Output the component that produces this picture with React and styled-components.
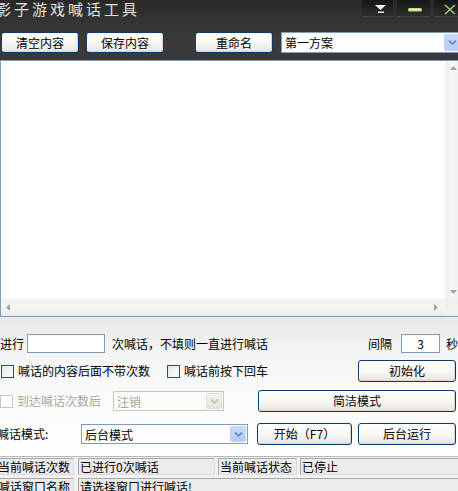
import React from 'react'
import styled, { createGlobalStyle } from 'styled-components'

const GlobalStyle = createGlobalStyle`
  html, body {
    margin: 0;
    padding: 0;
    overflow: hidden;
    background: #fff;
  }
  body {
    font-family: "Noto Sans CJK SC", "Liberation Sans", sans-serif;
    font-size: 12px;
    color: #000;
  }
`

const Window = styled.div`
  width: 462px;
  height: 491px;
  display: flex;
  flex-direction: column;
  overflow: hidden;
`

const Top = styled.div`
  height: 60px;
  background: linear-gradient(#282828, #343434 35%, #3b3b3b 70%, #383838);
  display: flex;
  flex-direction: column;
`

const TitleBar = styled.div`
  height: 20px;
  display: flex;
  align-items: flex-start;
`

const Title = styled.div`
  margin-left: -4px;
  font-family: "Noto Sans CJK SC", serif;
  font-size: 15px;
  line-height: 17px;
  letter-spacing: 3px;
  color: #e2e2e2;
  white-space: nowrap;
`

const WinControls = styled.div`
  margin-left: auto;
  display: flex;
  gap: 4px;
`

const WinBtn = styled.div`
  width: ${p => p.$w}px;
  height: 16px;
  background: linear-gradient(#161616, #242424 60%, #2e2e2e);
  border-bottom: 1px solid #444;
  display: flex;
`

const Toolbar = styled.div`
  height: 40px;
  padding: 12px 0 0 1px;
  box-sizing: border-box;
  display: flex;
  align-items: flex-start;
`

const Button = styled.button`
  flex-shrink: 0;
  width: ${p => p.$w}px;
  height: ${p => p.$h || 22}px;
  margin-left: ${p => p.$ml || 0}px;
  border: 1px solid #0a3a6e;
  border-radius: 3px;
  background: linear-gradient(#ffffff, #f7f7f4 55%, #e6e3da);
  box-shadow: inset 1px 1px 0 #fff, inset -1px -1px 0 #d8d5ca;
  font: 12px "Noto Sans CJK SC", sans-serif;
  color: #000;
  padding: 0;
  line-height: 1;
`

const Combo = styled.div`
  flex-shrink: 0;
  box-sizing: border-box;
  width: ${p => p.$w}px;
  height: ${p => p.$h || 20}px;
  margin-left: ${p => p.$ml || 0}px;
  border: 1px solid ${p => (p.$disabled ? '#c9c7ba' : '#7f9db9')};
  background: ${p => (p.$disabled ? '#fbfbf9' : '#fff')};
  color: ${p => (p.$disabled ? '#aca899' : '#000')};
  display: flex;
  align-items: center;
`

const ComboText = styled.span`
  flex: 1;
  padding-left: 3px;
  white-space: nowrap;
`

const ComboArrow = styled.span`
  width: 16px;
  align-self: stretch;
  margin: 1px;
  border-radius: 2px;
  background: ${p =>
    p.$disabled
      ? 'linear-gradient(#f4f4f0, #e4e2da)'
      : 'linear-gradient(#cbdafc, #b4c9f6)'};
  border: 1px solid ${p => (p.$disabled ? '#e0ded4' : '#c3d3f6')};
  box-sizing: border-box;
  display: flex;
  align-items: center;
  justify-content: center;
`

const Editor = styled.div`
  height: 257px;
  box-sizing: border-box;
  border-top: 1px solid #7f9db9;
  border-bottom: 1px solid #7f9db9;
  border-left: 1px solid #7f9db9;
  display: grid;
  grid-template-columns: 1fr 17px;
  grid-template-rows: 1fr 17px;
  background: #fff;
`

const TextArea = styled.div`
  background: #fff;
`

const VScroll = styled.div`
  background: linear-gradient(90deg, #f0f0ee, #f6f6f4 40%, #efefed);
  display: flex;
  flex-direction: column;
  justify-content: space-between;
  align-items: center;
  padding: 5px 0 5px;
  box-sizing: border-box;
`

const HScroll = styled.div`
  background: linear-gradient(#f0f0ee, #f6f6f4 40%, #ececea);
  display: flex;
  justify-content: space-between;
  align-items: center;
  padding: 0 7px 0 5px;
`

const Corner = styled.div`
  background: #f0f0ee;
`

const Panel = styled.div`
  flex: 1;
  background: linear-gradient(#e9e9e9, #f4f4f4 25%, #fbfbfb 60%, #fefefe);
  padding-top: 17px;
  display: flex;
  flex-direction: column;
`

const Row = styled.div`
  height: ${p => p.$h}px;
  margin-top: ${p => p.$mt || 0}px;
  display: flex;
  align-items: center;
`

const Label = styled.span`
  flex-shrink: 0;
  white-space: nowrap;
  width: ${p => (p.$w ? `${p.$w}px` : 'auto')};
  margin-left: ${p => p.$ml || 0}px;
  color: ${p => (p.$disabled ? '#aca899' : '#000')};
  line-height: 14px;
`

const Input = styled.div`
  flex-shrink: 0;
  box-sizing: border-box;
  width: ${p => p.$w}px;
  height: 19px;
  margin-left: ${p => p.$ml || 0}px;
  border: 1px solid #7f9db9;
  background: #fff;
  display: flex;
  align-items: center;
  justify-content: center;
  font-size: 12px;
`

const Check = styled.span`
  flex-shrink: 0;
  box-sizing: border-box;
  width: 13px;
  height: 13px;
  margin-left: ${p => p.$ml || 0}px;
  border: 1px solid ${p => (p.$disabled ? '#cac8bb' : '#1c5180')};
  background: ${p => (p.$disabled ? '#fff' : 'linear-gradient(135deg, #e6e6e0, #fff)')};
`

const StatusBar = styled.div`
  height: 35px;
  border-top: 1px solid #b9b9b9;
  background: #f1f1f1;
  padding-top: 1px;
  box-sizing: border-box;
  display: flex;
  flex-direction: column;
  gap: 3px;
`

const StatusRow = styled.div`
  height: 17px;
  flex-shrink: 0;
  display: flex;
  margin-left: -4px;
`

const Cell = styled.div`
  flex-shrink: 0;
  box-sizing: border-box;
  width: ${p => p.$w}px;
  margin-left: ${p => p.$ml || 0}px;
  height: 17px;
  border: 1px solid;
  border-color: #a8a8a8 #dcdcdc #dcdcdc #a8a8a8;
  background: #ebebeb;
  padding-left: ${p => p.$pl || 1}px;
  line-height: 15px;
  white-space: nowrap;
  overflow: hidden;
`

const Chevron = ({ color = '#4c6aa6' }) => (
  <svg width="9" height="7" viewBox="0 0 9 7">
    <path d="M1 1.5 L4.5 5 L8 1.5" fill="none" stroke={color} strokeWidth="1.8" />
  </svg>
)

const Arrow = ({ dir }) => {
  const pts = {
    up: '0,4 3.5,0 7,4',
    down: '0,0 7,0 3.5,4',
    left: '4,0 4,7 0,3.5',
    right: '0,0 0,7 4,3.5',
  }[dir]
  const vertical = dir === 'up' || dir === 'down'
  return (
    <svg width={vertical ? 7 : 4} height={vertical ? 4 : 7}>
      <polygon points={pts} fill="#a3a3a3" />
    </svg>
  )
}

export default function App() {
  return (
    <>
      <GlobalStyle />
      <Window>
        <Top>
          <TitleBar>
            <Title>影子游戏喊话工具</Title>
            <WinControls>
              <WinBtn $w={31}>
                <svg width="31" height="16">
                  <polygon points="13,5 24,5 18.5,10" fill="#f2f2f2" />
                  <rect x="16" y="11.5" width="6" height="1.5" fill="#f2f2f2" />
                </svg>
              </WinBtn>
              <WinBtn $w={33}>
                <svg width="33" height="16">
                  <rect x="11" y="8" width="14" height="3.5" rx="1.5" fill="#b3df86" />
                  <rect x="12" y="9" width="12" height="1.2" fill="#dcf5c4" />
                </svg>
              </WinBtn>
              <WinBtn $w={28}>
                <svg width="28" height="16">
                  <path d="M11 5 L21 14 M21 5 L11 14" stroke="#a6d67c" strokeWidth="1.4" />
                </svg>
              </WinBtn>
            </WinControls>
          </TitleBar>
          <Toolbar>
            <Button $w={78} $h={21}>清空内容</Button>
            <Button $w={78} $h={21} $ml={7}>保存内容</Button>
            <Button $w={78} $h={21} $ml={31}>重命名</Button>
            <Combo $w={181} $h={21} $ml={8}>
              <ComboText>第一方案</ComboText>
              <ComboArrow><Chevron color="#6d8cc8" /></ComboArrow>
            </Combo>
          </Toolbar>
        </Top>

        <Editor>
          <TextArea />
          <VScroll>
            <Arrow dir="up" />
            <Arrow dir="down" />
          </VScroll>
          <HScroll>
            <Arrow dir="left" />
            <Arrow dir="right" />
          </HScroll>
          <Corner />
        </Editor>

        <Panel>
          <Row $h={19}>
            <Label $w={24}>进行</Label>
            <Input $w={78} $ml={3} />
            <Label $w={156} $ml={7}>次喊话，不填则一直进行喊话</Label>
            <Label $w={24} $ml={100}>间隔</Label>
            <Input $w={39} $ml={9}>3</Input>
            <Label $ml={6}>秒</Label>
          </Row>
          <Row $h={22} $mt={7}>
            <Check $ml={1} />
            <Label $w={132} $ml={4}>喊话的内容后面不带次数</Label>
            <Check $ml={17} />
            <Label $w={84} $ml={4}>喊话前按下回车</Label>
            <Button $w={98} $ml={90}>初始化</Button>
          </Row>
          <Row $h={22} $mt={8}>
            <Check $disabled $ml={0} />
            <Label $disabled $w={84} $ml={4}>到达喊话次数后</Label>
            <Combo $disabled $w={111} $ml={12}>
              <ComboText>注销</ComboText>
              <ComboArrow $disabled><Chevron color="#c8c6bc" /></ComboArrow>
            </Combo>
            <Button $w={198} $ml={34}>简洁模式</Button>
          </Row>
          <Row $h={22} $mt={11}>
            <Label $w={84} $ml={-3}>喊话模式:</Label>
            <Combo $w={167}>
              <ComboText>后台模式</ComboText>
              <ComboArrow><Chevron color="#6d8cc8" /></ComboArrow>
            </Combo>
            <Button $w={95} $ml={9}>开始（F7）</Button>
            <Button $w={98} $ml={6}>后台运行</Button>
          </Row>
        </Panel>

        <StatusBar>
          <StatusRow>
            <Cell $w={78} $pl={1}>当前喊话次数</Cell>
            <Cell $w={137} $ml={4}>已进行0次喊话</Cell>
            <Cell $w={79} $ml={3}>当前喊话状态</Cell>
            <Cell $w={166} $ml={3}>已停止</Cell>
          </StatusRow>
          <StatusRow>
            <Cell $w={78} $pl={1}>喊话窗口名称</Cell>
            <Cell $w={388} $ml={4}>请选择窗口进行喊话!</Cell>
          </StatusRow>
        </StatusBar>
      </Window>
    </>
  )
}
